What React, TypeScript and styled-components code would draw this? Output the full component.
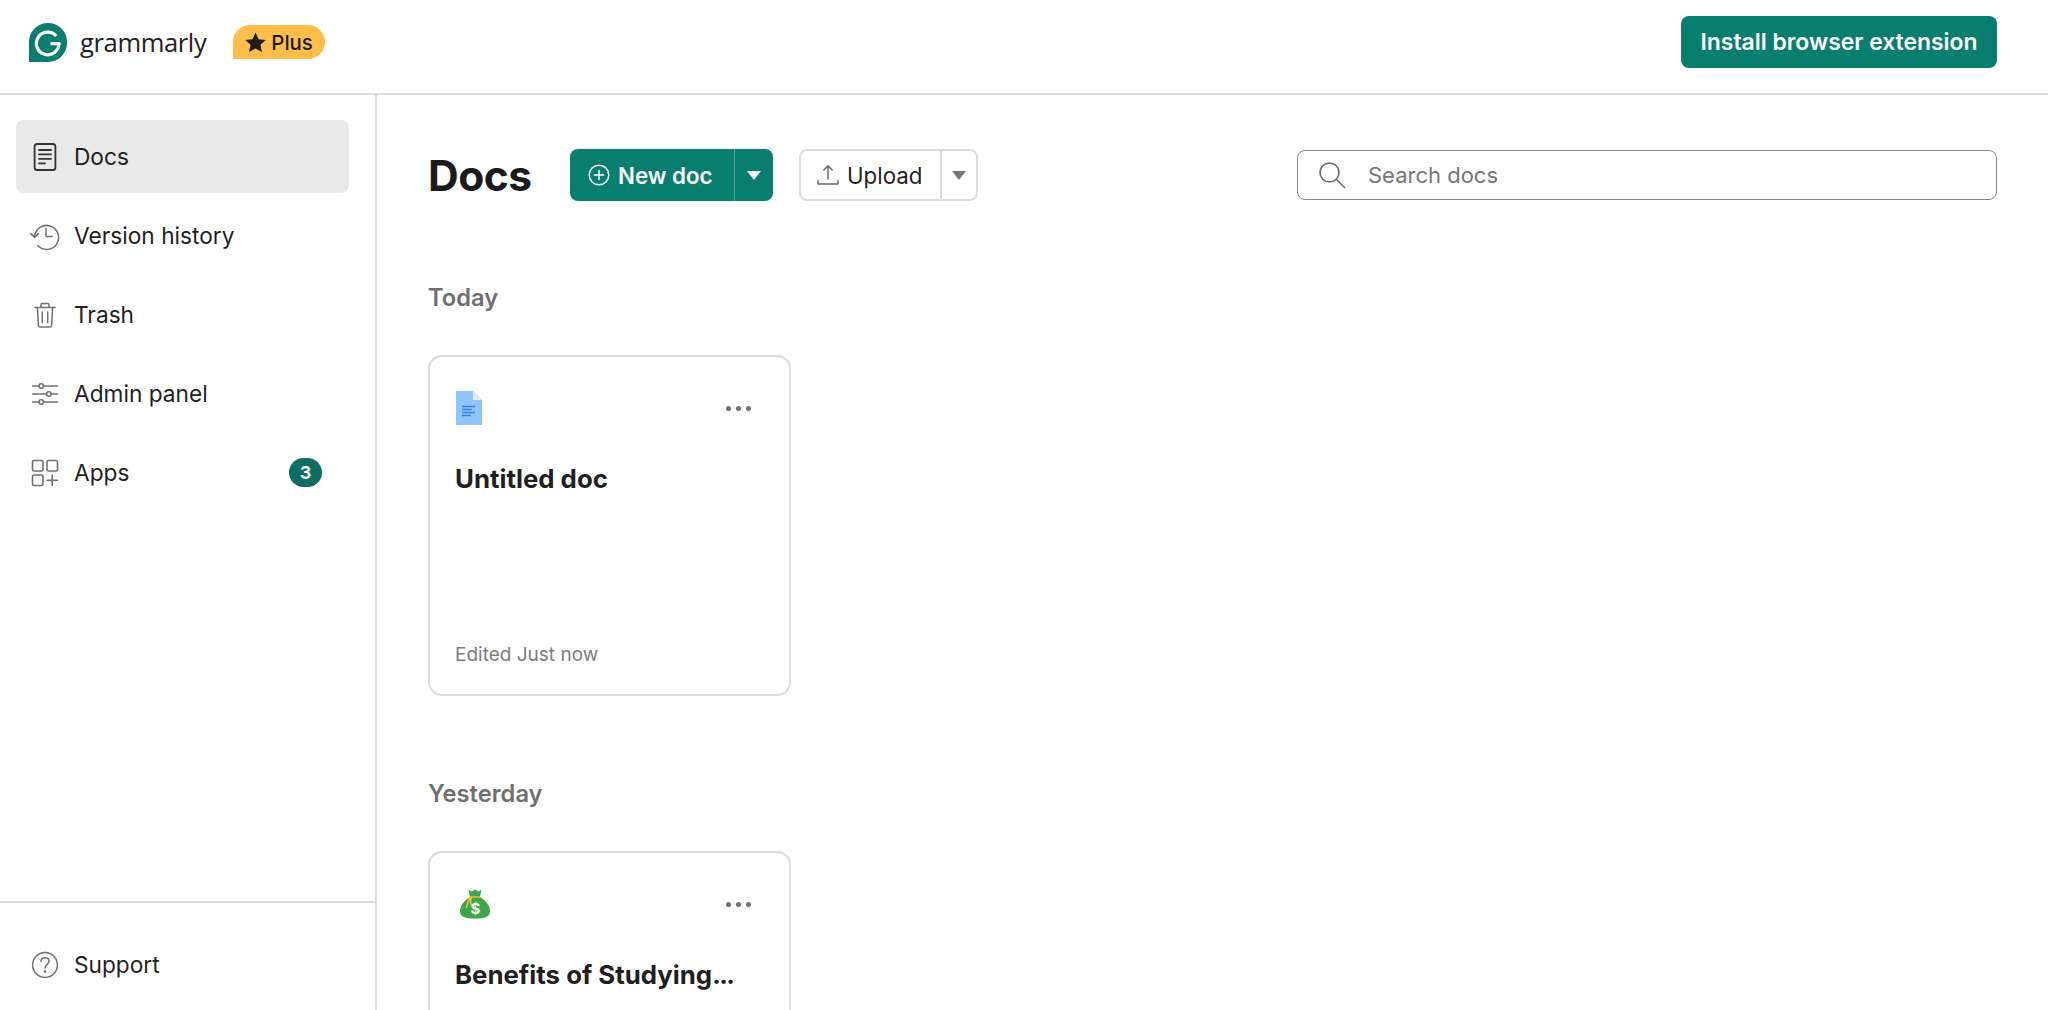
import React from 'react';
import styled, { createGlobalStyle } from 'styled-components';

const GREEN = '#087e6e';
const INK = '#1f1f1f';
const LINE = '#dcdcdc';
const GREY = '#6f6f6f';

const GlobalStyle = createGlobalStyle`
    html, body, #root {
        margin: 0;
        height: 100%;
    }
    body {
        background: #fff;
        color: ${INK};
        font-family: Inter, "Liberation Sans", sans-serif;
        overflow: hidden;
    }
    * {
        box-sizing: border-box;
    }
`;

const DocsIcon = () => (
    <svg width="30" height="30" viewBox="0 0 30 30" fill="none" stroke="#333" strokeWidth="1.8" strokeLinecap="round">
        <rect x="4.6" y="2" width="20.8" height="26" rx="2.6" />
        <path d="M9 8h12M9 12.4h12M9 16.8h12M9 21.4h6" />
    </svg>
);

const HistoryIcon = () => (
    <svg width="30" height="30" viewBox="0 0 30 30" fill="none" stroke="#707070" strokeWidth="1.5" strokeLinecap="round" strokeLinejoin="round">
        <path d="M4.6 16a12 12 0 1 1 3.2 8.6" />
        <path d="M0.8 12.6l3.8 3.8 3.8-3.8" />
        <path d="M16 7.5v8h6" />
    </svg>
);

const TrashIcon = () => (
    <svg width="30" height="30" viewBox="0 0 30 30" fill="none" stroke="#707070" strokeWidth="1.5" strokeLinecap="round" strokeLinejoin="round">
        <path d="M5 7.5h20M11 7.5V4.8c0-.9.6-1.4 1.4-1.4h5.2c.8 0 1.4.5 1.4 1.4v2.7" />
        <path d="M7.4 7.5l1 18c.1 1 .7 1.6 1.7 1.6h9.8c1 0 1.6-.6 1.7-1.6l1-18" />
        <path d="M12.3 12v10.5M17.7 12v10.5" />
    </svg>
);

const SlidersIcon = () => (
    <svg width="30" height="30" viewBox="0 0 30 30" fill="none" stroke="#707070" strokeWidth="1.5" strokeLinecap="round">
        <path d="M2.5 7h6.5M13.5 7h14M2.5 15h14M21 15h6.5M2.5 23h6.5M13.5 23h14" />
        <circle cx="11.2" cy="7" r="2.2" />
        <circle cx="18.8" cy="15" r="2.2" />
        <circle cx="11.2" cy="23" r="2.2" />
    </svg>
);

const AppsIcon = () => (
    <svg width="30" height="30" viewBox="0 0 30 30" fill="none" stroke="#707070" strokeWidth="1.6" strokeLinecap="round">
        <rect x="2.5" y="2.5" width="10.5" height="10.5" rx="1.6" />
        <rect x="17" y="2.5" width="10.5" height="10.5" rx="1.6" />
        <rect x="2.5" y="17" width="10.5" height="10.5" rx="1.6" />
        <path d="M22.2 17v10.5M17 22.2h10.5" />
    </svg>
);

const HelpIcon = () => (
    <svg width="30" height="30" viewBox="0 0 30 30" fill="none" stroke="#707070" strokeWidth="1.5" strokeLinecap="round">
        <circle cx="15" cy="15" r="12.4" />
        <path d="M11 11.6c0-2.4 1.8-3.8 4-3.8s4 1.4 4 3.5c0 3.2-4 3.3-4 6.6" />
        <circle cx="15" cy="21.6" r=".6" fill="#707070" />
    </svg>
);

const GrammarlyMark = () => (
    <svg width="38" height="39" viewBox="0 0 38 39">
        <path d="M19 0a19 19 0 0 1 19 19.5A19 19 0 0 1 19 39H0V19.5A19 19 0 0 1 19 0z" fill={GREEN} />
        <path d="M27.2 13A11.3 11.3 0 1 0 30 20.6h-8.6" fill="none" stroke="#fff" strokeWidth="3.2" />
    </svg>
);

const StarIcon = () => (
    <svg width="21" height="20" viewBox="0 0 24 23">
        <path d="M12 .6l3.5 7.6 8.3 1-6.1 5.6 1.6 8.2L12 18.9 4.700 23l1.600-8.200L.2 9.200l8.300-1z" fill="#1c1c1c" />
    </svg>
);

const PlusCircleIcon = () => (
    <svg width="22" height="22" viewBox="0 0 22 22" fill="none" stroke="#fff" strokeWidth="1.5" strokeLinecap="round">
        <circle cx="11" cy="11" r="9.8" />
        <path d="M11 6.500v9M6.500 11h9" />
    </svg>
);

const UploadIcon = () => (
    <svg width="22" height="22" viewBox="0 0 22 22" fill="none" stroke="#666" strokeWidth="1.4" strokeLinecap="round" strokeLinejoin="round">
        <path d="M11 15V2M6.800 6L11 1.800 15.200 6" />
        <path d="M1 16.500V20h20v-3.500" />
    </svg>
);

const SearchIcon = () => (
    <svg width="28" height="28" viewBox="0 0 28 28" fill="none" stroke="#6b6b6b" strokeWidth="1.6" strokeLinecap="round">
        <circle cx="11.500" cy="11.500" r="9.500" />
        <path d="M18.500 18.500L26.500 26.500" />
    </svg>
);

const DocFileIcon = () => (
    <svg width="28" height="34" viewBox="0 0 28 34">
        <path d="M1 0h17l9 9v25H1z" fill="#8ec5fb" />
        <path d="M18 0l9 9h-9z" fill="#dcedfd" />
        <path d="M7 15.500h13M7 18.500h10M7 21.500h13M7 24.500h9" stroke="#3d7fdc" strokeWidth="1.500" />
    </svg>
);

const MoneyBagIcon = () => (
    <svg width="35" height="30" viewBox="-5 0 35 30">
        <path d="M8.500 0.500l3.200 2 3.300-2 3.300 2 3.200-2-1.500 7.500h-10z" fill="#3ea64a" />
        <path d="M10 8h10c6 3.500 10 9 10 14 0 6-5 7.500-15 7.500S0 28 0 22C0 17 4 11.500 10 8z" fill="#3ea64a" />
        <path d="M10 8h10M10.500 8c-2 3-3.500 7-4 11M11 8.500c-.5 3-.5 5.500 0 8" stroke="#f2c531" strokeWidth="1.600" fill="none" />
        <text x="15.500" y="25" fontSize="15" fontWeight="700" fill="#fff" textAnchor="middle" fontFamily="Inter, sans-serif">$</text>
    </svg>
);

const CaretIcon: React.FC<{ color: string }> = ({ color }) => (
    <svg width="14" height="9" viewBox="0 0 14 9">
        <path d="M0 0h14L7 9z" fill={color} />
    </svg>
);

const App: React.FC = () => {
    return (
        <Page>
            <GlobalStyle />
            <TopBar>
                <Brand>
                    <GrammarlyMark />
                    <BrandName>grammarly</BrandName>
                    <PlanBadge>
                        <StarIcon />
                        Plus
                    </PlanBadge>
                </Brand>
                <InstallButton>Install browser extension</InstallButton>
            </TopBar>
            <Body>
                <Sidebar>
                    <NavList>
                        <NavItem $active>
                            <NavIcon><DocsIcon /></NavIcon>
                            Docs
                        </NavItem>
                        <NavItem>
                            <NavIcon><HistoryIcon /></NavIcon>
                            Version history
                        </NavItem>
                        <NavItem>
                            <NavIcon><TrashIcon /></NavIcon>
                            Trash
                        </NavItem>
                        <NavItem>
                            <NavIcon><SlidersIcon /></NavIcon>
                            Admin panel
                        </NavItem>
                        <NavItem>
                            <NavIcon><AppsIcon /></NavIcon>
                            Apps
                            <CountBadge>3</CountBadge>
                        </NavItem>
                    </NavList>
                    <SidebarFooter>
                        <NavItem>
                            <NavIcon><HelpIcon /></NavIcon>
                            Support
                        </NavItem>
                    </SidebarFooter>
                </Sidebar>
                <Main>
                    <Toolbar>
                        <PageTitle>Docs</PageTitle>
                        <NewDocButton>
                            <NewDocLabel>
                                <PlusCircleIcon />
                                New doc
                            </NewDocLabel>
                            <NewDocCaret>
                                <CaretIcon color="#fff" />
                            </NewDocCaret>
                        </NewDocButton>
                        <UploadButton>
                            <UploadLabel>
                                <UploadIcon />
                                Upload
                            </UploadLabel>
                            <UploadCaret>
                                <CaretIcon color="#777" />
                            </UploadCaret>
                        </UploadButton>
                        <SearchBox>
                            <SearchIcon />
                            <SearchText>Search docs</SearchText>
                        </SearchBox>
                    </Toolbar>
                    <SectionTitle>Today</SectionTitle>
                    <DocCard>
                        <CardTop>
                            <CardIcon><DocFileIcon /></CardIcon>
                            <MoreDots><i /><i /><i /></MoreDots>
                        </CardTop>
                        <CardTitle>Untitled doc</CardTitle>
                        <CardMeta>Edited Just now</CardMeta>
                    </DocCard>
                    <SectionTitle $next>Yesterday</SectionTitle>
                    <DocCard>
                        <CardTop>
                            <CardIcon><MoneyBagIcon /></CardIcon>
                            <MoreDots><i /><i /><i /></MoreDots>
                        </CardTop>
                        <CardTitle>Benefits of Studying<TightDots>...</TightDots></CardTitle>
                    </DocCard>
                </Main>
            </Body>
        </Page>
    );
};

export default App;

const Page = styled.div`
    height: 100vh;
    display: flex;
    flex-direction: column;
    overflow: hidden;
`;

const TopBar = styled.header`
    flex: 0 0 95px;
    display: flex;
    align-items: flex-start;
    justify-content: space-between;
    padding: 16px 51px 0 29px;
    border-bottom: 2px solid ${LINE};
`;

const Brand = styled.div`
    display: flex;
    align-items: center;
    height: 52px;
`;

const BrandName = styled.span`
    margin-left: 13px;
    font-family: "Open Sans", sans-serif;
    font-size: 25.6px;
    letter-spacing: -0.4px;
    color: #222;
`;

const PlanBadge = styled.span`
    display: flex;
    align-items: center;
    gap: 5px;
    height: 34px;
    margin-left: 27px;
    padding: 0 12px 0 12px;
    background: #ffbe4a;
    border-radius: 17px 17px 17px 0;
    font-size: 20.4px;
    font-weight: 500;
    color: #1c1c1c;
`;

const InstallButton = styled.button`
    width: 316px;
    height: 52px;
    border: none;
    border-radius: 8px;
    background: ${GREEN};
    color: #fff;
    font-family: inherit;
    font-size: 22.9px;
    font-weight: 600;
`;

const Body = styled.div`
    flex: 1;
    min-height: 0;
    display: flex;
`;

const Sidebar = styled.aside`
    flex: 0 0 377px;
    display: flex;
    flex-direction: column;
    justify-content: space-between;
    border-right: 2px solid ${LINE};
`;

const NavList = styled.nav`
    display: flex;
    flex-direction: column;
    gap: 6px;
    padding: 25px 26px 0 16px;
`;

const NavItem = styled.a<{ $active?: boolean }>`
    display: flex;
    align-items: center;
    gap: 14px;
    height: 73px;
    padding: 0 27px 0 14px;
    border-radius: 8px;
    background: ${(p) => (p.$active ? '#e9e9e9' : 'transparent')};
    font-size: 22.7px;
    color: ${INK};
`;

const NavIcon = styled.span`
    display: flex;
    width: 30px;
    height: 30px;
    flex: none;
`;

const CountBadge = styled.span`
    margin-left: auto;
    width: 33px;
    height: 29px;
    display: flex;
    align-items: center;
    justify-content: center;
    border-radius: 15px;
    background: #0b6e60;
    color: #fff;
    font-size: 18px;
    font-weight: 700;
`;

const SidebarFooter = styled.div`
    padding: 25px 26px 9px 16px;
    border-top: 2px solid ${LINE};
`;

const Main = styled.main`
    flex: 1;
    min-width: 0;
    padding: 54px 51px 0;
`;

const Toolbar = styled.div`
    display: flex;
    align-items: center;
    height: 52px;
`;

const PageTitle = styled.h1`
    margin: 0;
    width: 142px;
    font-size: 42.5px;
    font-weight: 700;
    letter-spacing: -0.5px;
    color: #1a1a1a;
`;

const NewDocButton = styled.div`
    display: flex;
    width: 203px;
    height: 52px;
    border-radius: 8px;
    background: ${GREEN};
    color: #fff;
`;

const NewDocLabel = styled.span`
    flex: 1;
    display: flex;
    align-items: center;
    gap: 8px;
    padding-left: 18px;
    font-size: 22.3px;
    font-weight: 600;
`;

const NewDocCaret = styled.span`
    width: 39px;
    display: flex;
    align-items: center;
    justify-content: center;
    border-left: 1px solid rgba(255, 255, 255, 0.3);
`;

const UploadButton = styled.div`
    display: flex;
    width: 179px;
    height: 52px;
    margin-left: 26px;
    border: 2px solid ${LINE};
    border-radius: 8px;
`;

const UploadLabel = styled.span`
    flex: 1;
    display: flex;
    align-items: center;
    gap: 8px;
    padding-left: 16px;
    font-size: 22.3px;
    color: ${INK};
`;

const UploadCaret = styled.span`
    width: 36px;
    display: flex;
    align-items: center;
    justify-content: center;
    border-left: 2px solid ${LINE};
`;

const SearchBox = styled.div`
    margin-left: auto;
    width: 700px;
    height: 50px;
    display: flex;
    align-items: center;
    gap: 22px;
    padding-left: 20px;
    border: 1.5px solid #8a8a8a;
    border-radius: 8px;
`;

const SearchText = styled.span`
    font-size: 22px;
    color: #777;
`;

const SectionTitle = styled.h2<{ $next?: boolean }>`
    margin: ${(p) => (p.$next ? '83px' : '82px')} 0 42px;
    height: 30px;
    line-height: 30px;
    font-size: 23.7px;
    font-weight: 600;
    color: ${GREY};
`;

const DocCard = styled.div`
    width: 363px;
    height: 341px;
    display: flex;
    flex-direction: column;
    padding: 26px 25px 28px 25px;
    border: 2px solid ${LINE};
    border-radius: 14px;
    flex: none;
`;

const CardTop = styled.div`
    display: flex;
    align-items: center;
    justify-content: space-between;
    height: 50px;
`;

const CardIcon = styled.span`
    display: flex;
`;

const MoreDots = styled.span`
    display: flex;
    gap: 5px;
    margin-right: 13px;
    i {
        width: 5px;
        height: 5px;
        border-radius: 50%;
        background: #6f6f6f;
    }
`;

const CardTitle = styled.div`
    margin-top: 30px;
    font-size: 25.8px;
    line-height: 32px;
    font-weight: 700;
    color: #1f1f1f;
`;

const TightDots = styled.span`
    letter-spacing: -1.6px;
`;

const CardMeta = styled.div`
    margin-top: auto;
    font-size: 19px;
    color: #7d7d7d;
`;
